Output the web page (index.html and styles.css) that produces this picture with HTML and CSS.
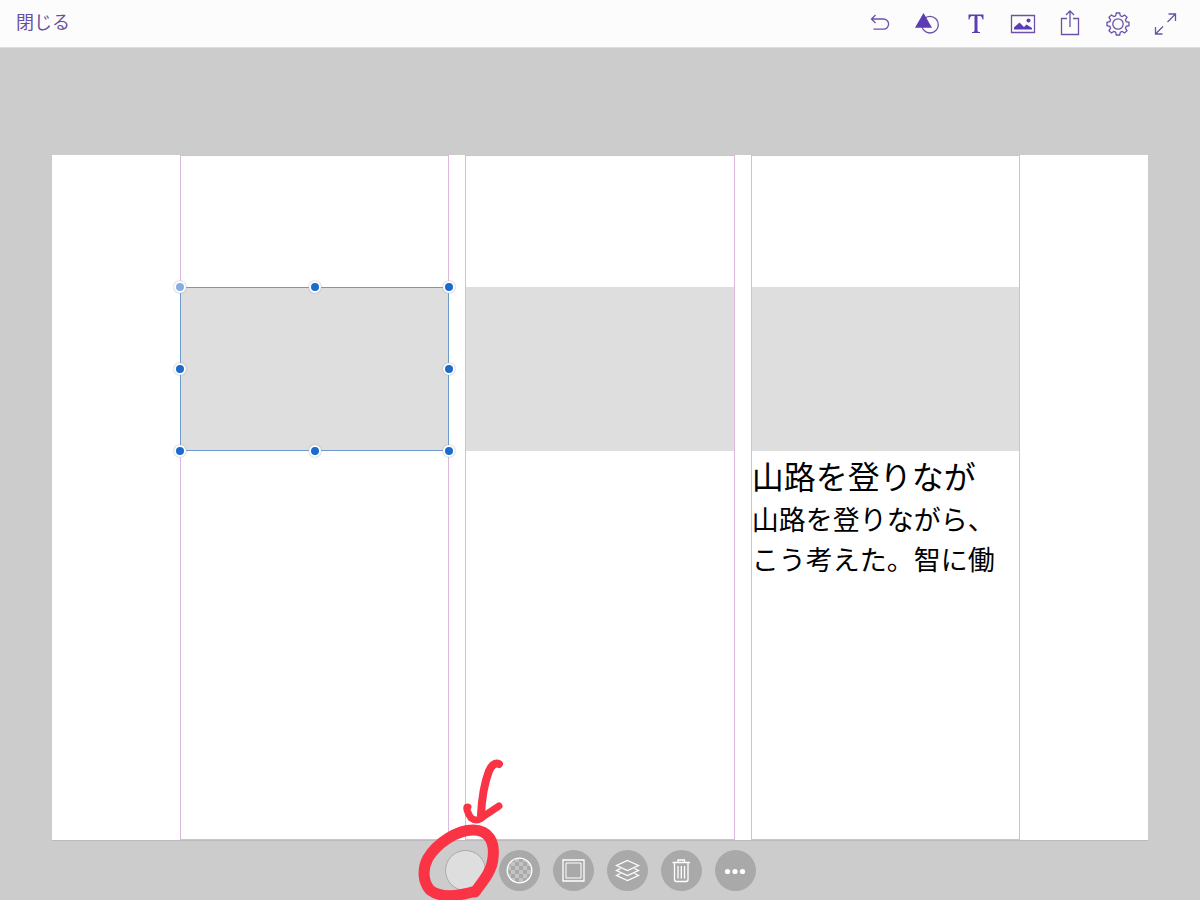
FILE: index.html
```html
<!DOCTYPE html>
<html lang="ja">
<head>
<meta charset="utf-8">
<meta name="viewport" content="width=device-width, initial-scale=1">
<title>レイアウト編集</title>
<link rel="stylesheet" href="styles.css">
</head>
<body>
<header class="topbar">
  <button class="close" type="button">閉じる</button>
  <nav class="tools" aria-label="ツール">
    <button type="button" aria-label="取り消し"><svg viewBox="0 0 28 28"><path d="M8.500 5 4.500 9 8.500 13M5 9H16.500a5 5 0 0 1 0 10.200H6.500"/></svg></button>
    <button type="button" aria-label="図形"><svg viewBox="0 0 28 28"><circle cx="16" cy="14.700" r="8.300"/><path class="solid" d="M9.500 3 18 17.700H1Z"/></svg></button>
    <button type="button" aria-label="テキスト"><svg viewBox="0 0 28 28"><path class="solid" d="M6.500 4.500H21.500V9.500H20.500C20.200 7 19.400 6 17.500 6H15.500V20.500C15.500 21.700 16.300 22 18 22.100V23H10V22.100C11.700 22 12.500 21.700 12.500 20.500V6H10.500C8.600 6 7.800 7 7.500 9.500H6.500Z"/></svg></button>
    <button type="button" aria-label="画像"><svg viewBox="0 0 28 28"><path d="M2.500 5.500H25.500V22.500H2.500Z"/><path class="solid" d="M5 19.500V17.500L10.500 12.500 15 17 17.500 14.500 23 18V19.500Z"/><circle class="solid" cx="19.500" cy="10.500" r="2"/></svg></button>
    <button type="button" aria-label="共有"><svg viewBox="0 0 28 28"><path d="M11 8.500H5.500V24.500H22.500V8.500H17M14 17V1.500M10 5 14 1 18 5"/></svg></button>
    <button type="button" aria-label="設定"><svg viewBox="0 0 28 28"><circle cx="14" cy="14" r="5.200"/><path d="M12.300 3H15.700L16.300 5.800 18.200 6.600 20.600 5 23 7.400 21.400 9.800 22.200 11.700 25 12.300V15.700L22.200 16.300 21.400 18.200 23 20.600 20.600 23 18.200 21.400 16.300 22.200 15.700 25H12.300L11.700 22.200 9.800 21.400 7.400 23 5 20.600 6.600 18.200 5.800 16.300 3 15.700V12.300L5.800 11.700 6.600 9.800 5 7.400 7.400 5 9.800 6.600 11.700 5.800Z"/></svg></button>
    <button type="button" aria-label="全画面"><svg viewBox="0 0 28 28"><path d="M16.500 12 24.500 4M17.500 4H24.500V11M12 16.500 4.500 24M4.500 17V24H11.500"/></svg></button>
  </nav>
</header>

<main class="stage">
  <section class="artboard">
    <div class="column">
      <div class="block selected">
        <i class="handle nw"></i><i class="handle n"></i><i class="handle ne"></i>
        <i class="handle w"></i><i class="handle e"></i>
        <i class="handle sw"></i><i class="handle s"></i><i class="handle se"></i>
      </div>
    </div>
    <div class="column"><div class="block"></div></div>
    <div class="column">
      <div class="block"></div>
      <h1 class="title">山路を登りなが</h1>
      <p class="copy">山路を登りながら、<br>こう考えた。智に働</p>
    </div>
  </section>
</main>

<footer class="actions">
  <div class="marked">
    <button class="action fill" type="button" aria-label="塗り"></button>
    <svg class="scribble" viewBox="0 0 120 165" aria-hidden="true">
      <path class="ring" d="M75 147C83 136 92 126 93 113C95 97 89 85 73 85C57 85 37 98 28 113C22 124 23 137 30 145C40 153 56 152 76 146"/>
      <path class="shaft" d="M99 19C95 17 91 21 89 26C84 39 82 50 81 70"/>
      <path class="head" d="M68 62C65 61 68 69 71 73C75 76 79 76 84 71L99 61"/>
    </svg>
  </div>
  <button class="action" type="button" aria-label="不透明度"><svg viewBox="0 0 41 41"><defs><pattern id="checks" width="8" height="8" x="16" y="16" patternUnits="userSpaceOnUse"><path class="check" d="M0 0H4V4H0ZM4 4H8V8H4Z"/></pattern></defs><circle class="checked" cx="20.500" cy="20.500" r="12.300" fill="url(#checks)"/></svg></button>
  <button class="action" type="button" aria-label="枠線"><svg viewBox="0 0 41 41"><path d="M10 10H31V31H10Z"/><path class="inner" d="M13 13H28V28H13Z"/></svg></button>
  <button class="action" type="button" aria-label="レイヤー"><svg viewBox="0 0 41 41"><path d="M20.500 10.500 31.500 15.500 20.500 20.500 9.500 15.500ZM13.500 18.500 9.500 20.500 20.500 25.500 31.500 20.500 27.500 18.500M13.500 23.500 9.500 25.500 20.500 30.500 31.500 25.500 27.500 23.500"/></svg></button>
  <button class="action" type="button" aria-label="削除"><svg viewBox="0 0 41 41"><path d="M11.500 12.500H29M17 12V10H23.500V12M13.500 13V29.500Q13.500 31.500 15.500 31.500H25Q27 31.500 27 29.500V13M17 16V28.500M20.300 16V28.500M23.500 16V28.500"/></svg></button>
  <button class="action" type="button" aria-label="その他"><svg viewBox="0 0 41 41"><g class="dots"><circle cx="12.500" cy="21.500" r="2.600"/><circle cx="20" cy="21.500" r="2.600"/><circle cx="27.500" cy="21.500" r="2.600"/></g></svg></button>
</footer>
</body>
</html>
```
FILE: styles.css
```css
* {
  box-sizing: border-box;
}

body {
  margin: 0;
  height: 100vh;
  display: flex;
  flex-direction: column;
  overflow: hidden;
  background: #cccccc;
  color: #000;
  font-family: "Noto Sans CJK JP", sans-serif;
}

button {
  border: 0;
  padding: 0;
  background: none;
  font: inherit;
}

svg {
  display: block;
}

.topbar {
  display: flex;
  align-items: center;
  justify-content: space-between;
  height: 48px;
  padding: 0 11px 0 16px;
  background: #fcfcfc;
  border-bottom: 1px solid #dcdcdc;
}

.topbar .close {
  color: #6750a4;
  font-size: 18px;
  font-weight: 400;
  line-height: 24px;
  padding-bottom: 6px;
}

.tools {
  display: grid;
  grid-template-columns: repeat(7, 1fr);
  width: 332px;
}

.tools button {
  display: flex;
  justify-content: center;
}

.tools svg {
  width: 28px;
  height: 28px;
  fill: none;
  stroke: #6b51a8;
  stroke-width: 1.3;
}

.tools .solid {
  fill: #5c3cb4;
  stroke: none;
}

.stage {
  flex: 1;
  display: flex;
  padding: 107px 52px 0;
}

.artboard {
  flex: 1;
  display: grid;
  grid-template-columns: repeat(3, 1fr);
  gap: 16px;
  padding: 0 128px;
  background: #fff;
  border-bottom: 1px solid #c0b8c0;
}

.column {
  border: 1px solid #dcb8dc;
  padding-top: 131px;
}

.block {
  height: 164px;
  background: #dedede;
}

.selected {
  position: relative;
  margin: 0 -1px;
  outline: 1px solid #6f9ad0;
  outline-offset: -1px;
}

.handle {
  position: absolute;
  width: 12px;
  height: 12px;
  margin: -6px;
  border: 2px solid #fff;
  border-radius: 50%;
  background: #1c6acb;
  box-shadow: 0 0 2px #9aa4b4;
}

.nw, .n, .ne { top: 0; }
.w, .e { top: 50%; }
.sw, .s, .se { top: 100%; }
.nw, .w, .sw { left: 0; }
.n, .s { left: 50%; }
.ne, .e, .se { left: 100%; }

.nw {
  background: #87aee0;
}

.title,
.copy {
  margin: 0;
  font-weight: 400;
  white-space: nowrap;
}

.title {
  padding: 2px 0;
  font-size: 32px;
  line-height: 44px;
}

.copy {
  font-size: 27px;
  line-height: 40px;
}

.actions {
  display: flex;
  justify-content: center;
  gap: 13px;
  height: 59px;
  padding-top: 9px;
}

.marked {
  position: relative;
  height: 41px;
}

.action {
  display: block;
  width: 41px;
  height: 41px;
  border-radius: 50%;
  background: #a9a9a9;
}

.action svg {
  fill: none;
  stroke: #fff;
  stroke-width: 1.3;
}

.fill {
  background: #dedede;
  border: 1px solid #a9a9a9;
}

.action .inner {
  stroke-width: 1;
}

.action .check {
  fill: #c4c4c4;
  stroke: none;
}

.dots {
  fill: #fff;
  stroke: none;
}

.scribble {
  position: absolute;
  left: -45px;
  top: -105px;
  width: 120px;
  height: 165px;
  fill: none;
  stroke: #fb3445;
  stroke-linecap: round;
  stroke-linejoin: round;
  pointer-events: none;
}

.ring {
  stroke-width: 11;
}

.shaft {
  stroke-width: 8;
}

.head {
  stroke-width: 7;
}
```
